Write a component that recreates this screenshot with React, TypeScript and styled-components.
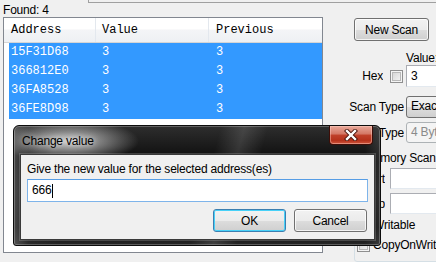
import React from "react";
import styled, { createGlobalStyle } from "styled-components";

const GlobalStyle = createGlobalStyle`
  html, body { margin: 0; padding: 0; background: #f0f0f0; overflow: hidden; }
  body { font-family: "Liberation Sans", Arial, sans-serif; font-size: 12px; color: #000; }
  * { box-sizing: border-box; }
`;

const Window = styled.div`
  position: relative;
  width: 436px;
  height: 262px;
  overflow: hidden;
  background: #f0f0f0;
  letter-spacing: -0.2px;
`;

const TopStrip = styled.div`
  height: 3px;
  margin-left: 88px;
  border-left: 1px solid #a0a0a0;
  border-bottom: 1px solid #a0a0a0;
`;

const MainRow = styled.div`
  display: flex;
  height: 259px;
`;

const LeftColumn = styled.div`
  width: 323px;
  flex: none;
  padding-left: 3px;
  display: flex;
  flex-direction: column;
`;

const FoundLabel = styled.div`
  height: 14px;
  line-height: 14px;
`;

const ListBox = styled.div`
  width: 320px;
  height: 236px;
  border: 1px solid #828790;
  background: #fff;
`;

const HeaderRow = styled.div`
  display: grid;
  grid-template-columns: 92px 113px 1fr;
  height: 25px;
  border-bottom: 1px solid #d5d5d5;
  background: linear-gradient(#ffffff 0%, #ffffff 45%, #f4f5f7 50%, #eef0f3 100%);
  font-family: "Liberation Mono", "Courier New", monospace;
  letter-spacing: 0;
`;

const HeaderCell = styled.div<{ $pad: number }>`
  padding-left: ${(p) => p.$pad}px;
  line-height: 24px;
  border-right: 1px solid #e3e8ee;
  &:last-child { border-right: none; }
`;

const Rows = styled.div`
  margin-left: 5px;
  display: flex;
  flex-direction: column;
`;

const Row = styled.div`
  display: grid;
  grid-template-columns: 86px 113px 1fr;
  height: 19px;
  line-height: 19px;
  background: #3399ff;
  color: #fff;
  font-family: "Liberation Mono", "Courier New", monospace;
  letter-spacing: 0;
`;

const Cell = styled.div<{ $pad: number }>`
  padding-left: ${(p) => p.$pad}px;
  white-space: nowrap;
`;

const RightPanel = styled.div`
  flex: 1;
  min-width: 0;
  display: flex;
  flex-direction: column;
`;

const PushButton = styled.button<{ $w: number; $default?: boolean }>`
  width: ${(p) => p.$w}px;
  height: 23px;
  flex: none;
  padding: 0;
  font: inherit;
  letter-spacing: -0.2px;
  color: #000;
  border: 1px solid ${(p) => (p.$default ? "#3c7fb1" : "#707070")};
  border-radius: 3px;
  background: linear-gradient(#f2f2f2 0%, #ebebeb 50%, #dddddd 51%, #cfcfcf 100%);
  box-shadow: inset 0 0 0 1px ${(p) => (p.$default ? "#48d1f8" : "rgba(255,255,255,0.75)")};
`;

const NewScanButton = styled(PushButton)`
  margin: 15px 0 0 31px;
`;

const ValueCaption = styled.div`
  margin: 10px 0 0 83px;
  height: 14px;
  line-height: 14px;
  white-space: nowrap;
`;

const FormRow = styled.div<{ $top: number; $h: number }>`
  display: flex;
  align-items: center;
  margin-top: ${(p) => p.$top}px;
  height: ${(p) => p.$h}px;
  white-space: nowrap;
`;

const RowLabel = styled.div<{ $w: number }>`
  width: ${(p) => p.$w}px;
  flex: none;
  text-align: right;
  overflow: hidden;
`;

const CheckBox = styled.div<{ $ml: number }>`
  width: 13px;
  height: 13px;
  flex: none;
  margin-left: ${(p) => p.$ml}px;
  border: 1px solid #8f8f8f;
  box-shadow: inset 0 0 0 1px #f4f4f4, inset 0 0 0 2px #b8b8b8;
  background-color: #f4f4f4;
  background-image: linear-gradient(135deg, #d0d0d0, #f8f8f8);
  background-clip: content-box;
  padding: 2px;
`;

const TextInput = styled.div<{ $ml: number; $w: number; $h: number }>`
  margin-left: ${(p) => p.$ml}px;
  width: ${(p) => p.$w}px;
  height: ${(p) => p.$h}px;
  flex: none;
  background: #fff;
  border: 1px solid #abadb3;
  border-right-color: #e2e3ea;
  border-bottom-color: #e3e9ef;
  padding-left: 4px;
  line-height: ${(p) => p.$h - 2}px;
`;

const Combo = styled.div<{ $disabled?: boolean }>`
  margin-left: 2px;
  width: 60px;
  height: 100%;
  flex: none;
  border: 1px solid ${(p) => (p.$disabled ? "#adb2b5" : "#707070")};
  border-radius: 3px;
  padding-left: 4px;
  line-height: 19px;
  color: ${(p) => (p.$disabled ? "#8a8a8a" : "#000")};
  background: ${(p) =>
    p.$disabled
      ? "#f4f4f4"
      : "linear-gradient(#f2f2f2 0%, #ebebeb 50%, #dddddd 51%, #cfcfcf 100%)"};
`;

const GroupBox = styled.div`
  margin: 15px 0 0 31px;
  width: 120px;
  flex: 1;
  border: 1px solid #d5dfe5;
  border-radius: 3px;
  display: flex;
  flex-direction: column;
`;

const GroupTitle = styled.div`
  margin: -8px 0 0 7px;
  padding: 0 2px;
  height: 14px;
  line-height: 14px;
  width: fit-content;
  background: #f0f0f0;
  white-space: nowrap;
`;

const CheckRow = styled.div<{ $top: number }>`
  display: flex;
  align-items: center;
  gap: 3px;
  margin-top: ${(p) => p.$top}px;
  padding-left: 1px;
  height: 14px;
  white-space: nowrap;
`;

/* ---------- dialog ---------- */

const Dialog = styled.div`
  position: absolute;
  left: 13px;
  top: 125px;
  width: 368px;
  height: 121px;
  border: 1px solid #0c0c0c;
  border-radius: 6px 6px 3px 3px;
  padding: 0 5px 5px 6px;
  display: flex;
  flex-direction: column;
  background:
    radial-gradient(ellipse 70px 22px at 55px 15px, rgba(225,225,225,0.9) 0%, rgba(190,190,190,0.6) 45%, rgba(120,120,120,0) 100%),
    linear-gradient(105deg, rgba(255,255,255,0) 52%, rgba(255,255,255,0.13) 58%, rgba(255,255,255,0) 64%),
    linear-gradient(to right, rgba(120,120,120,0.55) 0%, rgba(60,60,60,0.3) 4%, rgba(0,0,0,0) 12%, rgba(0,0,0,0) 96%, rgba(90,90,90,0.4) 100%),
    linear-gradient(to bottom, #2e2e2e 0%, #0b0b0b 30%, #151515 55%, #0a0a0a 85%, #262626 100%);
  box-shadow: inset 0 0 0 1px rgba(255,255,255,0.25);
`;

const TitleBar = styled.div`
  height: 28px;
  display: flex;
  align-items: center;
`;

const TitleText = styled.div`
  margin-left: 2px;
  margin-top: 2px;
  color: #000;
  text-shadow: 0 0 6px rgba(255,255,255,0.9);
`;

const CloseButton = styled.div`
  position: absolute;
  right: 7px;
  top: 0;
  width: 44px;
  height: 19px;
  border: 1px solid #3d0d07;
  border-top: none;
  border-radius: 0 0 4px 4px;
  background: linear-gradient(#e9a99a 0%, #d37664 45%, #c0412a 50%, #b5321c 80%, #d0553c 100%);
  box-shadow: inset 0 0 0 1px rgba(255,210,200,0.45);
  display: flex;
  align-items: center;
  justify-content: center;
`;

const ClientArea = styled.div`
  flex: 1;
  background: #f0f0f0;
  border: 1px solid #3a3a3a;
  box-shadow: 0 0 0 1px rgba(200,200,200,0.25);
  padding: 7px 6px 0 6px;
  display: flex;
  flex-direction: column;
`;

const Prompt = styled.div`
  height: 14px;
  line-height: 14px;
  white-space: nowrap;
`;

const DialogInput = styled.div`
  margin-top: 3px;
  width: 341px;
  height: 23px;
  background: #fff;
  border: 1px solid #7eb4ea;
  border-top-color: #569de5;
  padding-left: 4px;
  line-height: 21px;
  display: flex;
  align-items: center;
`;

const Caret = styled.span`
  display: inline-block;
  width: 1px;
  height: 14px;
  background: #000;
  margin-left: 1px;
`;

const ButtonRow = styled.div`
  margin-top: 7px;
  margin-right: 1px;
  display: flex;
  justify-content: flex-end;
  gap: 8px;
`;

const rows = [
  ["15F31D68", "3", "3"],
  ["366812E0", "3", "3"],
  ["36FA8528", "3", "3"],
  ["36FE8D98", "3", "3"],
];

export default function App() {
  return (
    <>
      <GlobalStyle />
      <Window>
        <TopStrip />
        <MainRow>
          <LeftColumn>
            <FoundLabel>Found: 4</FoundLabel>
            <ListBox>
              <HeaderRow>
                <HeaderCell $pad={7}>Address</HeaderCell>
                <HeaderCell $pad={6}>Value</HeaderCell>
                <HeaderCell $pad={7}>Previous</HeaderCell>
              </HeaderRow>
              <Rows>
                {rows.map((r) => (
                  <Row key={r[0]}>
                    <Cell $pad={2}>{r[0]}</Cell>
                    <Cell $pad={7}>{r[1]}</Cell>
                    <Cell $pad={8}>{r[2]}</Cell>
                  </Row>
                ))}
              </Rows>
            </ListBox>
          </LeftColumn>
          <RightPanel>
            <NewScanButton $w={75}>New Scan</NewScanButton>
            <ValueCaption>Value:</ValueCaption>
            <FormRow $top={0} $h={22}>
              <RowLabel $w={60}>Hex</RowLabel>
              <CheckBox $ml={7} />
              <TextInput $ml={3} $w={60} $h={22}>3</TextInput>
            </FormRow>
            <FormRow $top={9} $h={22}>
              <RowLabel $w={81}>Scan Type</RowLabel>
              <Combo>Exact Value</Combo>
            </FormRow>
            <FormRow $top={4} $h={21}>
              <RowLabel $w={81}>Value Type</RowLabel>
              <Combo $disabled>4 Bytes</Combo>
            </FormRow>
            <GroupBox>
              <GroupTitle>Memory Scan Options</GroupTitle>
              <FormRow $top={3} $h={21}>
                <RowLabel $w={30}>Start</RowLabel>
                <TextInput $ml={5} $w={60} $h={21} />
              </FormRow>
              <FormRow $top={4} $h={21}>
                <RowLabel $w={30}>Stop</RowLabel>
                <TextInput $ml={5} $w={60} $h={21} />
              </FormRow>
              <CheckRow $top={4}>
                <CheckBox $ml={1} />
                Writable
              </CheckRow>
              <CheckRow $top={6}>
                <CheckBox $ml={1} />
                CopyOnWrite
              </CheckRow>
            </GroupBox>
          </RightPanel>
        </MainRow>

        <Dialog>
          <TitleBar>
            <TitleText>Change value</TitleText>
          </TitleBar>
          <CloseButton>
            <svg width="14" height="12" viewBox="0 0 14 12">
              <path d="M3 2 L11 10 M11 2 L3 10" stroke="#4a140c" strokeWidth="4.2" strokeLinecap="square" />
              <path d="M3 2 L11 10 M11 2 L3 10" stroke="#ffffff" strokeWidth="2.4" strokeLinecap="square" />
            </svg>
          </CloseButton>
          <ClientArea>
            <Prompt>Give the new value for the selected address(es)</Prompt>
            <DialogInput>
              666<Caret />
            </DialogInput>
            <ButtonRow>
              <PushButton $w={73} $default>OK</PushButton>
              <PushButton $w={73}>Cancel</PushButton>
            </ButtonRow>
          </ClientArea>
        </Dialog>
      </Window>
    </>
  );
}
